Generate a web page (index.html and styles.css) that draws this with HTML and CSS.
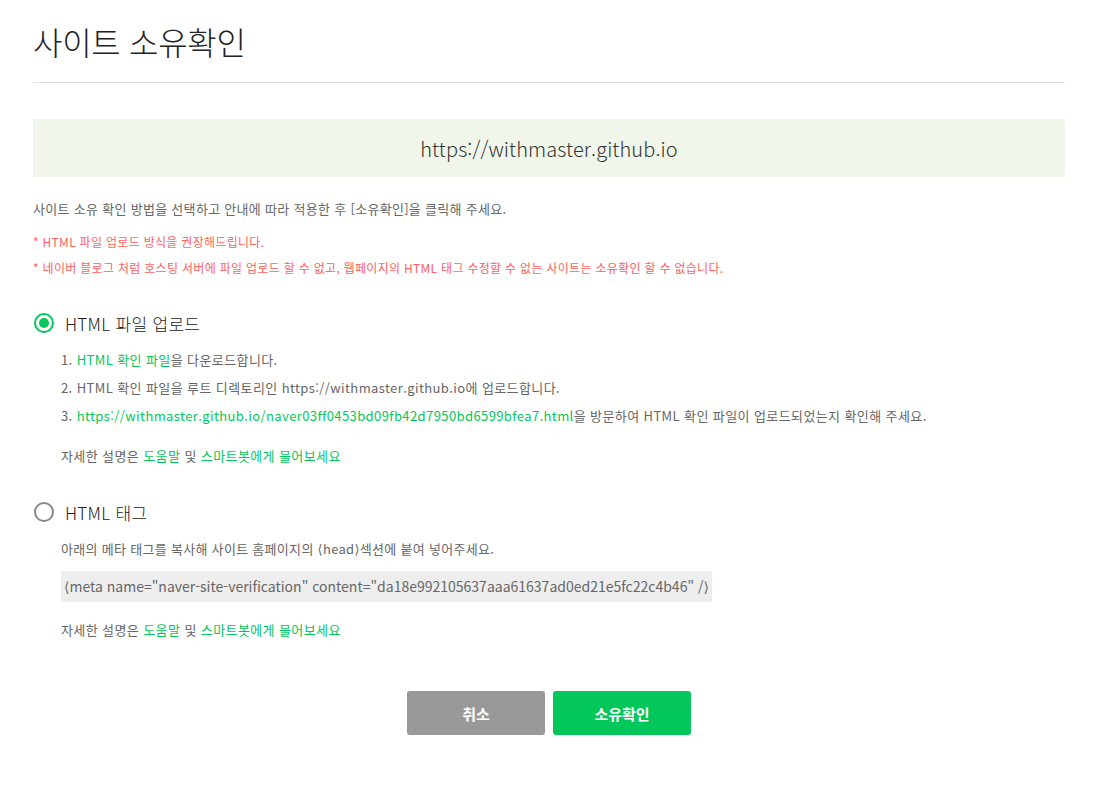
FILE: index.html
```html
<!DOCTYPE html>
<html lang="ko">
<head>
<meta charset="utf-8">
<title>사이트 소유확인</title>
<link rel="stylesheet" href="styles.css">
</head>
<body>
<div class="page">
  <h1 class="title">사이트 소유확인</h1>
  <div class="site-box">https://withmaster.github.io</div>
  <p class="desc">사이트 소유 확인 방법을 선택하고 안내에 따라 적용한 후 [소유확인]을 클릭해 주세요.</p>
  <p class="warn warn-first">* HTML 파일 업로드 방식을 권장해드립니다.</p>
  <p class="warn">* 네이버 블로그 처럼 호스팅 서버에 파일 업로드 할 수 없고, 웹페이지의 HTML 태그 수정할 수 없는 사이트는 소유확인 할 수 없습니다.</p>

  <div class="option option-first">
    <div class="option-head">
      <span class="radio checked"></span>
      <span class="option-label">HTML 파일 업로드</span>
    </div>
    <ol class="steps">
      <li>1. <span class="green">HTML 확인 파일</span>을 다운로드합니다.</li>
      <li>2. HTML 확인 파일을 루트 디렉토리인 https://withmaster.github.io에 업로드합니다.</li>
      <li>3. <span class="green">https://withmaster.github.io/naver03ff0453bd09fb42d7950bd6599bfea7.html</span>을 방문하여 HTML 확인 파일이 업로드되었는지 확인해 주세요.</li>
    </ol>
    <p class="help">자세한 설명은 <span class="green">도움말</span> 및 <span class="green">스마트봇에게 물어보세요</span></p>
  </div>

  <div class="option option-second">
    <div class="option-head">
      <span class="radio"></span>
      <span class="option-label">HTML 태그</span>
    </div>
    <p class="tag-desc">아래의 메타 태그를 복사해 사이트 홈페이지의 <span class="ang">⟨</span>head<span class="ang">⟩</span>섹션에 붙여 넣어주세요.</p>
    <div class="code"><span class="ang">⟨</span>meta name="naver-site-verification" content="da18e992105637aaa61637ad0ed21e5fc22c4b46" /<span class="ang">⟩</span></div>
    <p class="help help-tag">자세한 설명은 <span class="green">도움말</span> 및 <span class="green">스마트봇에게 물어보세요</span></p>
  </div>

  <div class="buttons">
    <button class="btn btn-cancel">취소</button>
    <button class="btn btn-ok">소유확인</button>
  </div>
</div>
</body>
</html>
```
FILE: styles.css
```css
* { box-sizing: border-box; }
html, body { margin: 0; padding: 0; background: #fff; }
body {
  font-family: "Noto Sans CJK KR", "Noto Sans", sans-serif;
  color: #666;
}
.page {
  width: 1032px;
  margin-left: 33px;
  padding-top: 17px;
}
.title {
  margin: 0;
  font-size: 32px;
  font-weight: 300;
  color: #222;
  line-height: 48px;
  padding-bottom: 17px;
  border-bottom: 1px solid #dedede;
  letter-spacing: -0.3px;
}
.site-box {
  margin-top: 36px;
  height: 58px;
  background: #f0f6e9;
  display: flex;
  align-items: center;
  justify-content: center;
  font-size: 20px;
  font-weight: 300;
  color: #333;
  letter-spacing: 0.1px;
}
.desc {
  margin: 22px 0 0;
  font-size: 13px;
  line-height: 20px;
  color: #666;
  letter-spacing: 0.3px;
}
.warn {
  margin: 6px 0 0;
  font-size: 12px;
  line-height: 20px;
  color: #ff5f5f;
  letter-spacing: 0.3px;
}
.warn-first { margin-top: 13px; }
.option-first { margin-top: 33px; }
.option-second { margin-top: 30px; }
.option-head {
  display: flex;
  align-items: center;
  gap: 11px;
  height: 24px;
}
.radio {
  width: 20px;
  height: 20px;
  border-radius: 50%;
  border: 2px solid #888;
  margin-left: 1px;
  display: inline-flex;
  align-items: center;
  justify-content: center;
}
.radio.checked { border-color: #03c75a; }
.radio.checked::after {
  content: "";
  width: 10px;
  height: 10px;
  border-radius: 50%;
  background: #03c75a;
}
.option-label {
  font-size: 17px;
  font-weight: 300;
  color: #222;
  letter-spacing: 0.3px;
}
.steps {
  list-style: none;
  margin: 11px 0 0;
  padding: 0 0 0 28px;
}
.steps li {
  font-size: 13px;
  line-height: 28px;
  color: #666;
  letter-spacing: 0.4px;
}
.green { color: #03c75a; }
.help {
  margin: 12px 0 0 28px;
  font-size: 13px;
  line-height: 28px;
  color: #666;
  letter-spacing: 0.4px;
}
.tag-desc {
  margin: 11px 0 0 28px;
  font-size: 13px;
  line-height: 28px;
  letter-spacing: 0.3px;
}
.ang { font-family: "DejaVu Sans", sans-serif; }
.code {
  margin: 7px 0 0 28px;
  display: inline-block;
  background: #eeeeee;
  height: 31px;
  line-height: 31px;
  padding: 0 3px;
  font-size: 14px;
  color: #666;
  letter-spacing: 0px;
}
.help-tag { margin-top: 14px; }
.buttons {
  margin-top: 47px;
  display: flex;
  justify-content: center;
  gap: 8px;
}
.btn {
  width: 138px;
  height: 44px;
  border: 0;
  border-radius: 3px;
  color: #fff;
  font-family: inherit;
  font-size: 15px;
  font-weight: 700;
}
.btn-cancel { background: #999999; }
.btn-ok { background: #03c75a; }
```
